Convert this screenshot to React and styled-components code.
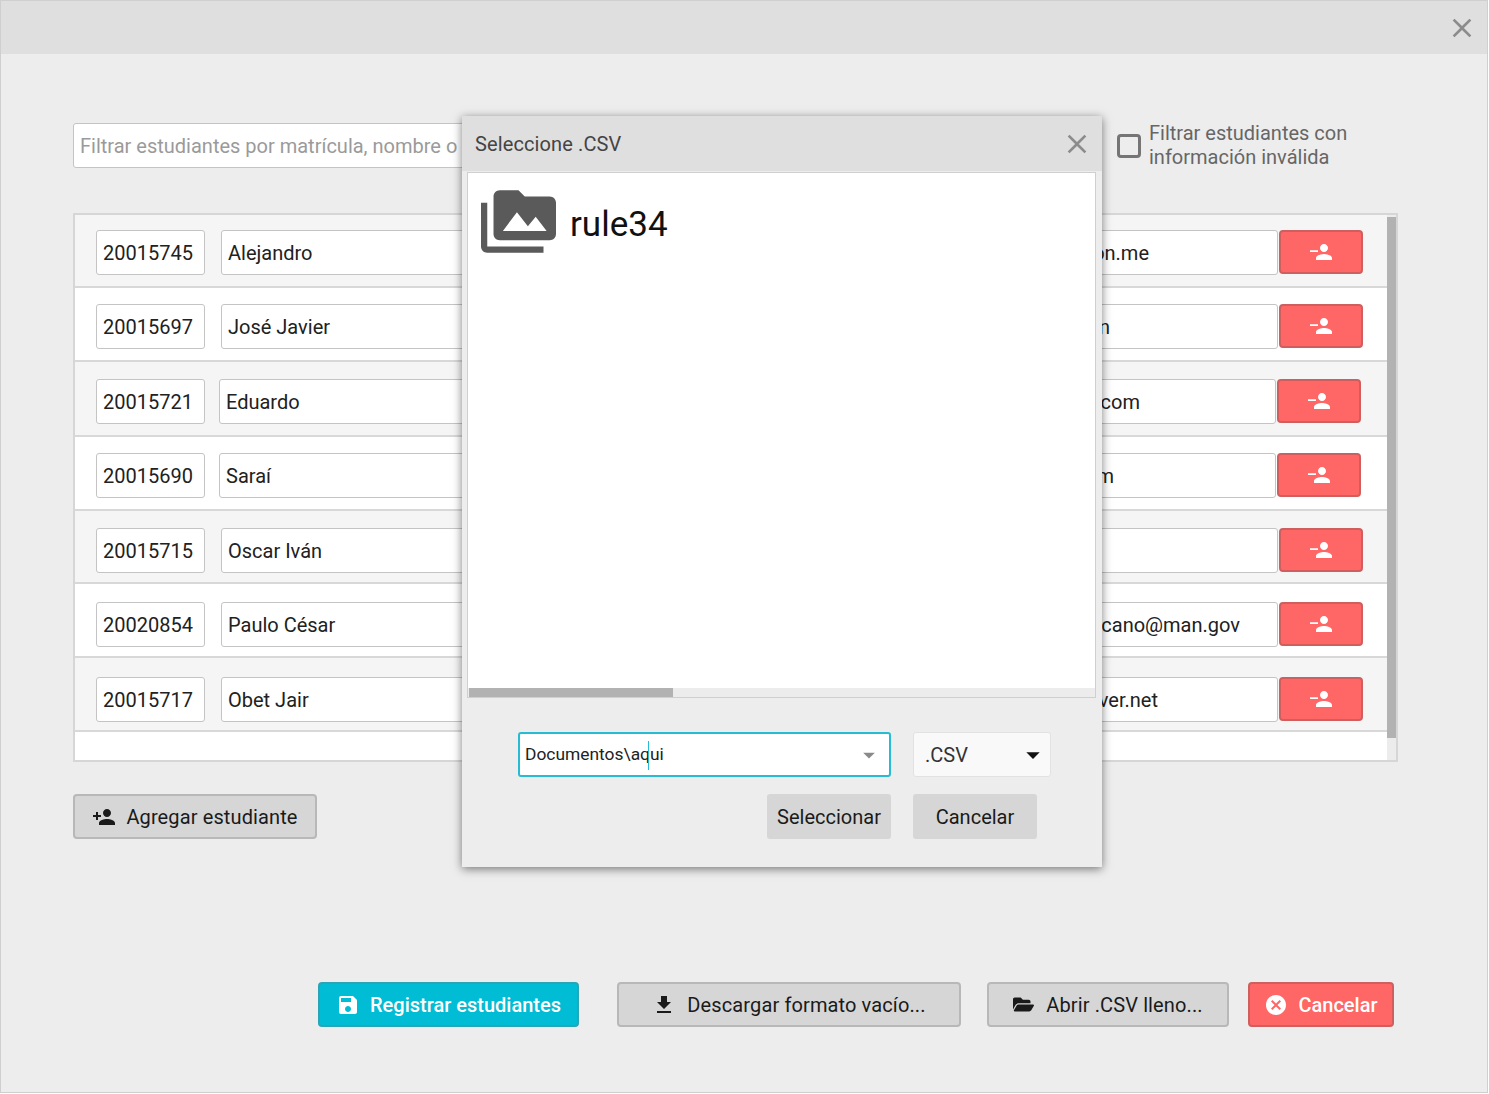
import React from 'react';
import styled, { createGlobalStyle } from 'styled-components';
import { MdClose, MdPersonAdd, MdSave, MdFileDownload, MdCancel, MdPermMedia, MdArrowDropDown } from 'react-icons/md';
import { FaFolderOpen } from 'react-icons/fa';

const GlobalStyle = createGlobalStyle`
    html, body {
        margin: 0;
        background: #fff;
        overflow: hidden;
    }
    * {
        box-sizing: border-box;
        font-family: Roboto, "Liberation Sans", sans-serif;
    }
`;

const Window = styled.div`
    position: relative;
    width: 1488px;
    height: 1093px;
    display: flex;
    flex-direction: column;
    background: #ededed;
    border: 1px solid #cfcfcf;
`;

const TitleBar = styled.div`
    flex: none;
    height: 53px;
    display: flex;
    align-items: center;
    justify-content: flex-end;
    padding-right: 9px;
    background: #dfdfdf;
    color: #8c8c8c;
`;

const Body = styled.div`
    flex: 1;
    display: flex;
    flex-direction: column;
    padding: 69px 89px 65px 72px;
`;

const FilterRow = styled.div`
    display: flex;
    align-items: center;
    height: 45px;
`;

const FilterInput = styled.input`
    flex: 1;
    height: 45px;
    padding: 0 6px;
    font-size: 20px;
    color: #212121;
    background: #fff;
    border: 1px solid #c4c4c4;
    border-radius: 3px;
    outline: none;
    &::placeholder {
        color: #9a9a9a;
        opacity: 1;
    }
`;

const FilterLabel = styled.label`
    width: 281px;
    margin-left: 21px;
    display: flex;
    align-items: center;
    gap: 8px;
    font-size: 20px;
    line-height: 24px;
    color: #666;
    span:last-child {
        margin-top: -2px;
    }
`;

const CheckBox = styled.span`
    flex: none;
    width: 24px;
    height: 24px;
    border: 3px solid #757575;
    border-radius: 4px;
`;

const Panel = styled.div`
    position: relative;
    height: 549px;
    margin-top: 45px;
    background: #fff;
    border: 2px solid #d6d6d6;
    padding-right: 8px;
`;

const ScrollTrack = styled.div`
    position: absolute;
    top: 0;
    right: 0;
    bottom: 0;
    width: 9px;
    padding-top: 2px;
    background: #ececec;
`;

const ScrollThumb = styled.div`
    height: 521px;
    background: #b2b2b2;
`;

const Row = styled.div`
    height: ${p => p.$height}px;
    display: flex;
    align-items: flex-start;
    padding: ${p => p.$top}px ${p => p.$right}px 0 21px;
    background: ${p => (p.$shaded ? '#f5f5f5' : '#fff')};
    border-bottom: 2px solid #d8d8d8;
`;

const Field = styled.input`
    flex: ${p => (p.$grow ? '1' : 'none')};
    width: ${p => (p.$width ? `${p.$width}px` : 'auto')};
    min-width: 0;
    height: 45px;
    margin-left: ${p => p.$gap || 0}px;
    padding: 0 ${p => p.$inset || 6}px 0 6px;
    font-size: 20px;
    color: #212121;
    text-align: ${p => (p.$inset ? 'right' : 'left')};
    background: #fff;
    border: 1px solid #c4c4c4;
    border-radius: 3px;
    outline: none;
`;

const Button = styled.button`
    flex: none;
    width: ${p => p.$width}px;
    height: 45px;
    display: flex;
    align-items: center;
    justify-content: center;
    gap: ${p => p.$gap || 11}px;
    margin-left: ${p => p.$offset || 0}px;
    padding: 0;
    font-size: 20px;
    font-weight: ${p => (p.$tone === 'gray' ? 400 : 500)};
    letter-spacing: ${p => (p.$tone === 'gray' ? '0.12px' : '0')};
    color: ${p => (p.$tone === 'gray' ? '#1a1a1a' : '#fff')};
    background: ${p => ({ gray: '#d6d6d6', cyan: '#00bcd4', red: '#ff6666' }[p.$tone])};
    border: 2px solid ${p => ({ gray: '#b8b8b8', cyan: '#2aa5b5', red: '#cf5f5f' }[p.$tone])};
    border-radius: 4px;
`;

const RemoveButton = styled(Button)`
    width: 84px;
    margin-left: 1px;
    height: 44px;
    svg {
        display: block;
    }
`;

const AddRow = styled.div`
    margin-top: 32px;
`;

const Footer = styled.div`
    margin-top: auto;
    display: flex;
    justify-content: flex-end;
    margin-right: 4px;
`;

const Dialog = styled.div`
    position: absolute;
    left: 461px;
    top: 115px;
    width: 640px;
    height: 751px;
    display: flex;
    flex-direction: column;
    background: #ededed;
    box-shadow: 0 2px 9px rgba(0, 0, 0, 0.5);
`;

const DialogHeader = styled.div`
    flex: none;
    height: 55px;
    display: flex;
    align-items: center;
    justify-content: space-between;
    padding: 0 9px 0 13px;
    font-size: 20px;
    letter-spacing: 0.12px;
    color: #444;
    background: #dfdfdf;
    svg {
        color: #8c8c8c;
    }
`;

const FileList = styled.div`
    flex: none;
    height: 526px;
    margin: 1px 6px 0 5px;
    display: flex;
    flex-direction: column;
    background: #fff;
    border: 1px solid #cfcfcf;
`;

const FileArea = styled.div`
    flex: 1;
    padding: 11px 0 0 13px;
`;

const FileItem = styled.div`
    display: flex;
    align-items: center;
    gap: 14px;
    font-size: 35px;
    color: #111;
    svg {
        color: #5a5a5a;
    }
    span {
        margin-top: 6px;
    }
`;

const HScroll = styled.div`
    flex: none;
    height: 9px;
    background: #ececec;
`;

const HThumb = styled.div`
    width: 204px;
    height: 9px;
    margin-left: 1px;
    background: #b2b2b2;
`;

const DialogForm = styled.div`
    padding: 34px 51px 0 56px;
    display: flex;
    flex-direction: column;
    gap: 17px;
`;

const FormRow = styled.div`
    display: flex;
    gap: 22px;
`;

const Combo = styled.div`
    width: 373px;
    height: 45px;
    display: flex;
    align-items: center;
    justify-content: space-between;
    padding: 0 6px 0 5px;
    font-size: 17.4px;
    color: #222;
    background: #fff;
    border: 2px solid #26bcd4;
    border-radius: 3px;
    span:first-child {
        padding-top: 1px;
    }
    svg {
        color: #8a8a8a;
    }
`;

const TextCaret = styled.span`
    display: inline-block;
    width: 1px;
    height: 29px;
    margin: 0 1px 0 -2px;
    vertical-align: middle;
    background: #26bcd4;
`;

const TypeSelect = styled.div`
    width: 138px;
    height: 45px;
    display: flex;
    align-items: center;
    justify-content: space-between;
    padding: 0 1px 0 11px;
    font-size: 20px;
    color: #333;
    background: #f9f9f9;
    border: 1px solid #e2e2e2;
    border-radius: 3px;
    svg {
        color: #111;
    }
`;

const FlatButton = styled.button`
    width: 124px;
    height: 45px;
    padding: 0;
    font-size: 20px;
    color: #1a1a1a;
    background: #d6d6d6;
    border: none;
    border-radius: 3px;
`;

const FormActions = styled(FormRow)`
    padding-left: 249px;
`;

const PersonRemove = () => (
    <svg width="24" height="24" viewBox="0 0 24 24" fill="currentColor">
        <path d="M15 12c2.21 0 4-1.79 4-4s-1.79-4-4-4-4 1.79-4 4 1.79 4 4 4zm0 2c-2.67 0-8 1.34-8 4v2h16v-2c0-2.66-5.33-4-8-4zM1 10.2h8v1.8H1z" />
    </svg>
);

const students = [
    { id: '20015745', name: 'Alejandro', email: 'alejandro@zoon.me', inset: 128, height: 73, top: 15, right: 25, gap: 16, shaded: true },
    { id: '20015697', name: 'José Javier', email: 'jjavier@lin.cn', inset: 167, height: 74, top: 16, right: 25, gap: 16 },
    { id: '20015721', name: 'Eduardo', email: 'eduardo@mail.com', inset: 135, height: 75, top: 17, right: 27, gap: 14, shaded: true },
    { id: '20015690', name: 'Saraí', email: 'sarai@site.com', inset: 161, height: 74, top: 16, right: 27, gap: 14 },
    { id: '20015715', name: 'Oscar Iván', email: 'oscar@iv.mx', inset: 200, height: 73, top: 17, right: 25, gap: 16, shaded: true },
    { id: '20020854', name: 'Paulo César', email: 'paulo.cano@man.gov', inset: 37, height: 74, top: 18, right: 25, gap: 16 },
    { id: '20015717', name: 'Obet Jair', email: 'obet@server.net', inset: 119, height: 74, top: 19, right: 25, gap: 16, shaded: true }
];

const App = () => (
    <Window>
        <GlobalStyle />
        <TitleBar>
            <MdClose size={32} />
        </TitleBar>
        <Body>
            <FilterRow>
                <FilterInput placeholder="Filtrar estudiantes por matrícula, nombre o correo electrónico" />
                <FilterLabel>
                    <CheckBox />
                    <span>Filtrar estudiantes con información inválida</span>
                </FilterLabel>
            </FilterRow>
            <Panel>
                {students.map(s => (
                    <Row key={s.id} $height={s.height} $top={s.top} $right={s.right} $shaded={s.shaded}>
                        <Field $width={109} readOnly value={s.id} />
                        <Field $width={300} $gap={s.gap} readOnly value={s.name} />
                        <Field $grow $gap={16} $inset={s.inset} readOnly value={s.email} />
                        <RemoveButton $tone="red" $width={84}>
                            <PersonRemove />
                        </RemoveButton>
                    </Row>
                ))}
                <ScrollTrack>
                    <ScrollThumb />
                </ScrollTrack>
            </Panel>
            <AddRow>
                <Button $tone="gray" $width={244} $gap={10}>
                    <MdPersonAdd size={24} />
                    Agregar estudiante
                </Button>
            </AddRow>
            <Footer>
                <Button $tone="cyan" $width={261} $gap={10}>
                    <MdSave size={24} />
                    Registrar estudiantes
                </Button>
                <Button $tone="gray" $width={344} $offset={38}>
                    <MdFileDownload size={24} />
                    Descargar formato vacío...
                </Button>
                <Button $tone="gray" $width={242} $offset={26} $gap={12}>
                    <FaFolderOpen size={21} />
                    Abrir .CSV lleno...
                </Button>
                <Button $tone="red" $width={146} $offset={19} $gap={10}>
                    <MdCancel size={24} />
                    Cancelar
                </Button>
            </Footer>
        </Body>
        <Dialog>
            <DialogHeader>
                Seleccione .CSV
                <MdClose size={32} />
            </DialogHeader>
            <FileList>
                <FileArea>
                    <FileItem>
                        <MdPermMedia size={75} />
                        <span>rule34</span>
                    </FileItem>
                </FileArea>
                <HScroll>
                    <HThumb />
                </HScroll>
            </FileList>
            <DialogForm>
                <FormRow>
                    <Combo>
                        <span>Documentos\aq<TextCaret />ui</span>
                        <MdArrowDropDown size={28} />
                    </Combo>
                    <TypeSelect>
                        .CSV
                        <MdArrowDropDown size={32} />
                    </TypeSelect>
                </FormRow>
                <FormActions>
                    <FlatButton>Seleccionar</FlatButton>
                    <FlatButton>Cancelar</FlatButton>
                </FormActions>
            </DialogForm>
        </Dialog>
    </Window>
);

export default App;
